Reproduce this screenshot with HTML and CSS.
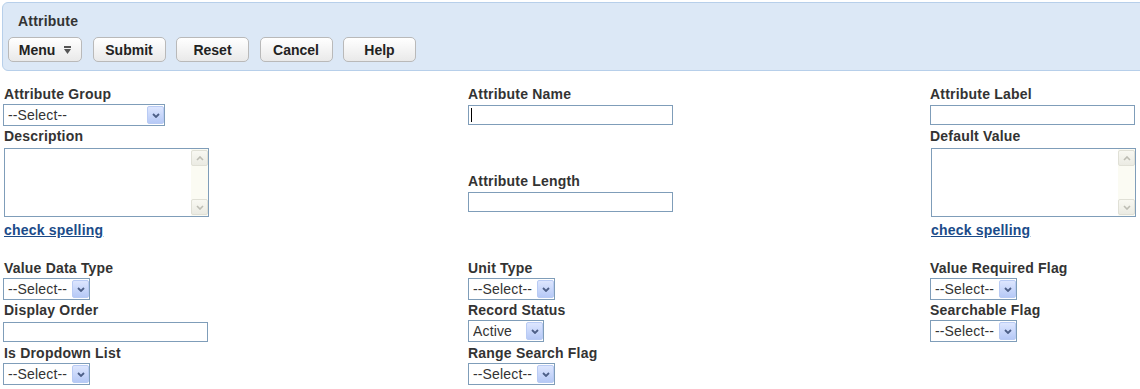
FILE: index.html
```html
<!DOCTYPE html>
<html lang="en">
<head>
  <meta charset="UTF-8">
  <title>Attribute</title>
  <link rel="stylesheet" href="styles.css">
</head>
<body>
  <div class="panel">
    <div class="panel-title">Attribute</div>
    <div class="toolbar">
      <button class="btn menu-btn">Menu
        <svg width="7" height="8" viewBox="0 0 7 8"><rect x="0" y="0" width="7" height="2" fill="#555"/><polygon points="0,3 7,3 3.5,8" fill="#555"/></svg>
      </button>
      <button class="btn">Submit</button>
      <button class="btn">Reset</button>
      <button class="btn">Cancel</button>
      <button class="btn">Help</button>
    </div>
  </div>

  <form class="attr-form">
    <!-- row 1 -->
    <div class="field">
      <label>Attribute Group</label>
      <span class="sel wide"><select><option>--Select--</option></select><span class="arrow"><svg width="8" height="5" viewBox="0 0 8 5"><path d="M1 1 L4 4 L7 1" stroke="#4d5f87" stroke-width="1.8" fill="none"/></svg></span></span>
    </div>
    <div class="field">
      <label>Attribute Name</label>
      <span class="focused"><input class="text-input" type="text"></span>
    </div>
    <div class="field">
      <label>Attribute Label</label>
      <input class="text-input" type="text">
    </div>

    <!-- row 2 -->
    <div class="field">
      <label>Description</label>
      <div class="textbox">
        <textarea></textarea>
        <div class="vscroll">
          <div class="sbtn"><svg width="8" height="5" viewBox="0 0 8 5"><path d="M1 4 L4 1 L7 4" stroke="#bdbdb4" stroke-width="1.6" fill="none"/></svg></div>
          <div class="sbtn"><svg width="8" height="5" viewBox="0 0 8 5"><path d="M1 1 L4 4 L7 1" stroke="#bdbdb4" stroke-width="1.6" fill="none"/></svg></div>
        </div>
      </div>
      <a class="spell" href="#">check spelling</a>
    </div>
    <div class="field length">
      <label>Attribute Length</label>
      <input class="text-input low" type="text">
    </div>
    <div class="field">
      <label>Default Value</label>
      <div class="textbox">
        <textarea></textarea>
        <div class="vscroll">
          <div class="sbtn"><svg width="8" height="5" viewBox="0 0 8 5"><path d="M1 4 L4 1 L7 4" stroke="#bdbdb4" stroke-width="1.6" fill="none"/></svg></div>
          <div class="sbtn"><svg width="8" height="5" viewBox="0 0 8 5"><path d="M1 1 L4 4 L7 1" stroke="#bdbdb4" stroke-width="1.6" fill="none"/></svg></div>
        </div>
      </div>
      <a class="spell" href="#">check spelling</a>
    </div>

    <!-- row 3 -->
    <div class="field">
      <label>Value Data Type</label>
      <span class="sel small"><select><option>--Select--</option></select><span class="arrow"><svg width="8" height="5" viewBox="0 0 8 5"><path d="M1 1 L4 4 L7 1" stroke="#4d5f87" stroke-width="1.8" fill="none"/></svg></span></span>
    </div>
    <div class="field">
      <label>Unit Type</label>
      <span class="sel small"><select><option>--Select--</option></select><span class="arrow"><svg width="8" height="5" viewBox="0 0 8 5"><path d="M1 1 L4 4 L7 1" stroke="#4d5f87" stroke-width="1.8" fill="none"/></svg></span></span>
    </div>
    <div class="field">
      <label>Value Required Flag</label>
      <span class="sel small"><select><option>--Select--</option></select><span class="arrow"><svg width="8" height="5" viewBox="0 0 8 5"><path d="M1 1 L4 4 L7 1" stroke="#4d5f87" stroke-width="1.8" fill="none"/></svg></span></span>
    </div>

    <!-- row 4 -->
    <div class="field">
      <label>Display Order</label>
      <input class="text-input low spaced" type="text">
    </div>
    <div class="field">
      <label>Record Status</label>
      <span class="sel status"><select><option>Active</option><option>Inactive</option></select><span class="arrow"><svg width="8" height="5" viewBox="0 0 8 5"><path d="M1 1 L4 4 L7 1" stroke="#4d5f87" stroke-width="1.8" fill="none"/></svg></span></span>
    </div>
    <div class="field">
      <label>Searchable Flag</label>
      <span class="sel small"><select><option>--Select--</option></select><span class="arrow"><svg width="8" height="5" viewBox="0 0 8 5"><path d="M1 1 L4 4 L7 1" stroke="#4d5f87" stroke-width="1.8" fill="none"/></svg></span></span>
    </div>

    <!-- row 5 -->
    <div class="field">
      <label>Is Dropdown List</label>
      <span class="sel small"><select><option>--Select--</option></select><span class="arrow"><svg width="8" height="5" viewBox="0 0 8 5"><path d="M1 1 L4 4 L7 1" stroke="#4d5f87" stroke-width="1.8" fill="none"/></svg></span></span>
    </div>
    <div class="field">
      <label>Range Search Flag</label>
      <span class="sel small"><select><option>--Select--</option></select><span class="arrow"><svg width="8" height="5" viewBox="0 0 8 5"><path d="M1 1 L4 4 L7 1" stroke="#4d5f87" stroke-width="1.8" fill="none"/></svg></span></span>
    </div>
  </form>
</body>
</html>
```

FILE: styles.css
```css
body {
  margin: 0;
  overflow: hidden;
  font-family: "Liberation Sans", Arial, sans-serif;
  font-size: 14px;
  color: #333;
  background-color: #fff;
}

.panel {
  width: 1160px;
  height: 69px;
  box-sizing: border-box;
  margin: 2px 0 0 2px;
  padding: 10px 0 8px 5px;
  background-color: #dce8f6;
  border: 1px solid #b7cfea;
  border-radius: 6px 0 0 6px;
}

.panel-title {
  margin-left: 10px;
  line-height: 16px;
  font-weight: bold;
  letter-spacing: 0.2px;
}

.toolbar {
  display: flex;
  gap: 10.5px;
  margin-top: 8px;
}

.btn {
  width: 73px;
  height: 25px;
  padding: 0;
  display: flex;
  align-items: center;
  justify-content: center;
  gap: 9px;
  border: 1px solid #b9b9b9;
  border-radius: 5px;
  background: linear-gradient(#ffffff, #e9e9e9);
  font-family: "Liberation Sans", Arial, sans-serif;
  font-size: 14px;
  font-weight: bold;
  color: #222;
  cursor: pointer;
}

.menu-btn {
  width: 74px;
}

.attr-form {
  display: grid;
  grid-template-columns: 465px 462px 1fr;
  row-gap: 2px;
  align-items: start;
  margin: 15px 0 0 0;
  padding-left: 3px;
}

.field label {
  display: block;
  line-height: 16px;
  font-weight: bold;
  letter-spacing: 0.2px;
  color: #333;
}

.field:nth-child(3n+1) label {
  padding-left: 1px;
}

.field.length {
  margin-top: 45px;
}

.text-input {
  display: block;
  width: 205px;
  height: 20px;
  box-sizing: border-box;
  margin-top: 3px;
  padding: 0 3px;
  border: 1px solid #7f9db9;
  font-family: "Liberation Sans", Arial, sans-serif;
  font-size: 14px;
  outline: none;
}

.text-input.low {
  margin-top: 3px;
}

.text-input.spaced {
  margin-top: 4px;
  margin-bottom: 1px;
}

.focused {
  display: block;
  position: relative;
  width: 205px;
  margin-top: 3px;
}

.focused .text-input {
  margin-top: 0;
}

.focused::after {
  content: "";
  position: absolute;
  left: 3px;
  top: 3px;
  width: 1px;
  height: 14px;
  background-color: #000;
}

.sel {
  display: flex;
  height: 22px;
  box-sizing: border-box;
  margin-top: 2px;
  border: 1px solid #7f9db9;
  background-color: #fff;
}

.sel.wide {
  width: 162px;
}

.sel.small {
  width: 87px;
}

.sel.status {
  width: 76px;
}

.sel select {
  -webkit-appearance: none;
  appearance: none;
  flex: 1;
  min-width: 0;
  height: 100%;
  padding: 0 0 0 4px;
  border: 0;
  outline: none;
  background: transparent;
  font-family: "Liberation Sans", Arial, sans-serif;
  font-size: 14px;
  letter-spacing: 0.15px;
  color: #333;
}

.sel .arrow {
  width: 17px;
  box-sizing: border-box;
  margin: 1px 0;
  display: flex;
  align-items: center;
  justify-content: center;
  border: 1px solid #b9cbf4;
  border-radius: 2px;
  background: linear-gradient(#dde6fe, #b6c9f6);
}

.textbox {
  display: flex;
  width: 205px;
  height: 69px;
  box-sizing: border-box;
  margin: 4px 0 0 1px;
  border: 1px solid #7f9db9;
  background-color: #fff;
}

.textbox textarea {
  flex: 1;
  min-width: 0;
  border: 0;
  padding: 2px 3px;
  resize: none;
  outline: none;
  font-family: "Liberation Sans", Arial, sans-serif;
  font-size: 14px;
}

.vscroll {
  width: 17px;
  padding: 1px 0;
  box-sizing: border-box;
  display: flex;
  flex-direction: column;
  justify-content: space-between;
  background-color: #fbfbf3;
}

.sbtn {
  height: 16px;
  box-sizing: border-box;
  display: flex;
  align-items: center;
  justify-content: center;
  border: 1px solid #e0e0d6;
  border-radius: 2px;
  background: linear-gradient(#f8f8f2, #ebebe3);
}

.spell {
  display: block;
  width: max-content;
  margin: 5px 0 20px 1px;
  line-height: 16px;
  font-weight: bold;
  letter-spacing: 0.2px;
  color: #1b4b89;
  text-decoration: underline;
}
```
